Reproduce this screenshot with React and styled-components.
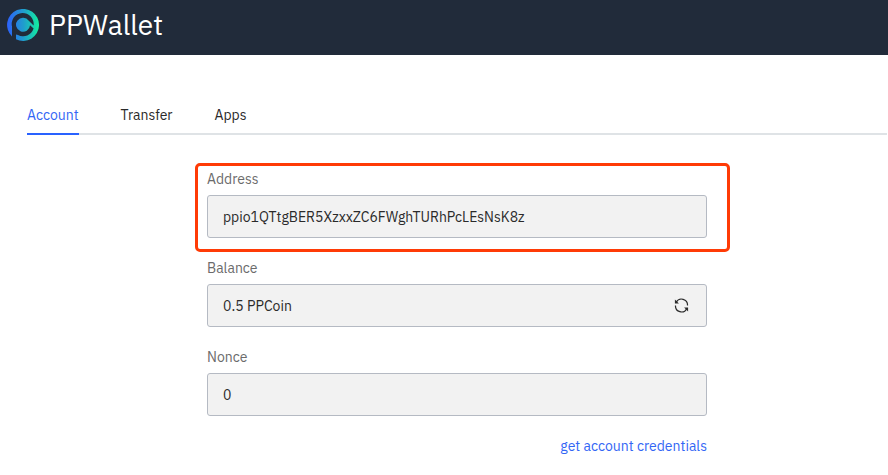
import React from "react";
import styled, { createGlobalStyle } from "styled-components";

const GlobalStyle = createGlobalStyle`
  *, *::before, *::after { box-sizing: border-box; }
  body {
    margin: 0;
    background: #fff;
    color: #2a2a2a;
    font-family: "IBM Plex Sans", "Noto Sans", sans-serif;
    font-size: 14px;
    line-height: 20px;
  }
`;

const Header = styled.header`
  display: flex;
  align-items: center;
  gap: 9px;
  height: 55px;
  padding: 0 7px 5px;
  background: #212b3a;
`;

const Brand = styled.h1`
  margin: 0;
  color: #fff;
  font-size: 28px;
  font-weight: 400;
  line-height: 36px;
`;

const Main = styled.main`
  padding: 40px 1px 0 27px;
`;

const Tabs = styled.nav`
  display: flex;
  gap: 42px;
  border-bottom: 2px solid #dfe3e6;
`;

const Tab = styled.a`
  margin-bottom: -2px;
  padding: 10px 0 8px;
  border-bottom: 2px solid ${(p) => (p.$active ? "#2962ff" : "transparent")};
  color: ${(p) => (p.$active ? "#3366f5" : "#2a2a2a")};
  text-decoration: none;
`;

const Form = styled.form`
  display: flex;
  flex-direction: column;
  gap: 20px;
  max-width: 500px;
  margin: 34px auto 0;
`;

const Field = styled.div`
  position: relative;
  display: flex;
  flex-direction: column;
  gap: 6px;
`;

const Highlight = styled.div`
  position: absolute;
  inset: -6px -23px -14px -12px;
  border: 3px solid #ff3b06;
  border-radius: 5px;
  pointer-events: none;
`;

const Label = styled.label`
  color: #6b6b6b;
`;

const Control = styled.div`
  display: flex;
  align-items: center;
  height: 43px;
  padding: 0 17px 0 15px;
  border: 1px solid #b5bac3;
  border-radius: 3px;
  background: #f2f2f2;
`;

const Value = styled.input`
  flex: 1;
  min-width: 0;
  padding: 0;
  border: 0;
  outline: 0;
  background: transparent;
  color: #2a2a2a;
  font: inherit;
`;

const IconButton = styled.button`
  display: flex;
  padding: 0;
  border: 0;
  background: transparent;
  color: #2a2a2a;
  cursor: pointer;
`;

const CredentialsLink = styled.a`
  align-self: flex-end;
  color: #3366f5;
  text-decoration: none;
`;

function Logo() {
  return (
    <svg width="33" height="33" viewBox="0 0 33 33" aria-hidden="true">
      <defs>
        <linearGradient id="brand" gradientUnits="userSpaceOnUse" x1="0" y1="16" x2="33" y2="16">
          <stop offset="0" stopColor="#2d60fb" />
          <stop offset="0.5" stopColor="#209dcd" />
          <stop offset="1" stopColor="#11f49b" />
        </linearGradient>
      </defs>
      <path
        fill="url(#brand)"
        d="M5 27.5A16 16 0 1 1 9 30.3V25.6L11 25.9A11 11 0 0 0 26.6 19.6L23 16.2A7 7 0 1 1 21.8 11.8L26.6 16.4A11 11 0 1 0 5 17.5Z"
      />
    </svg>
  );
}

function RefreshIcon() {
  return (
    <svg width="15" height="15" viewBox="0 0 15 15" fill="none" stroke="currentColor" strokeWidth="1.2" aria-hidden="true">
      <path d="M2.2 4.3A6 6 0 0 1 13.5 7.5M12.8 10.7A6 6 0 0 1 1.5 7.5" />
      <path d="M.9 1.4V5.4H4.9ZM14.1 13.6V9.6H10.1Z" fill="currentColor" stroke="none" />
    </svg>
  );
}

function ReadOnlyField({ id, label, value, highlighted, children }) {
  return (
    <Field>
      <Label htmlFor={id}>{label}</Label>
      <Control>
        <Value id={id} value={value} readOnly />
        {children}
      </Control>
      {highlighted && <Highlight />}
    </Field>
  );
}

export default function App() {
  return (
    <>
      <GlobalStyle />
      <Header>
        <Logo />
        <Brand>PPWallet</Brand>
      </Header>
      <Main>
        <Tabs>
          <Tab href="#account" $active aria-current="page">Account</Tab>
          <Tab href="#transfer">Transfer</Tab>
          <Tab href="#apps">Apps</Tab>
        </Tabs>
        <Form>
          <ReadOnlyField id="address" label="Address" value="ppio1QTtgBER5XzxxZC6FWghTURhPcLEsNsK8z" highlighted />
          <ReadOnlyField id="balance" label="Balance" value="0.5 PPCoin">
            <IconButton type="button" aria-label="Refresh balance">
              <RefreshIcon />
            </IconButton>
          </ReadOnlyField>
          <ReadOnlyField id="nonce" label="Nonce" value="0" />
          <CredentialsLink href="#credentials">get account credentials</CredentialsLink>
        </Form>
      </Main>
    </>
  );
}
